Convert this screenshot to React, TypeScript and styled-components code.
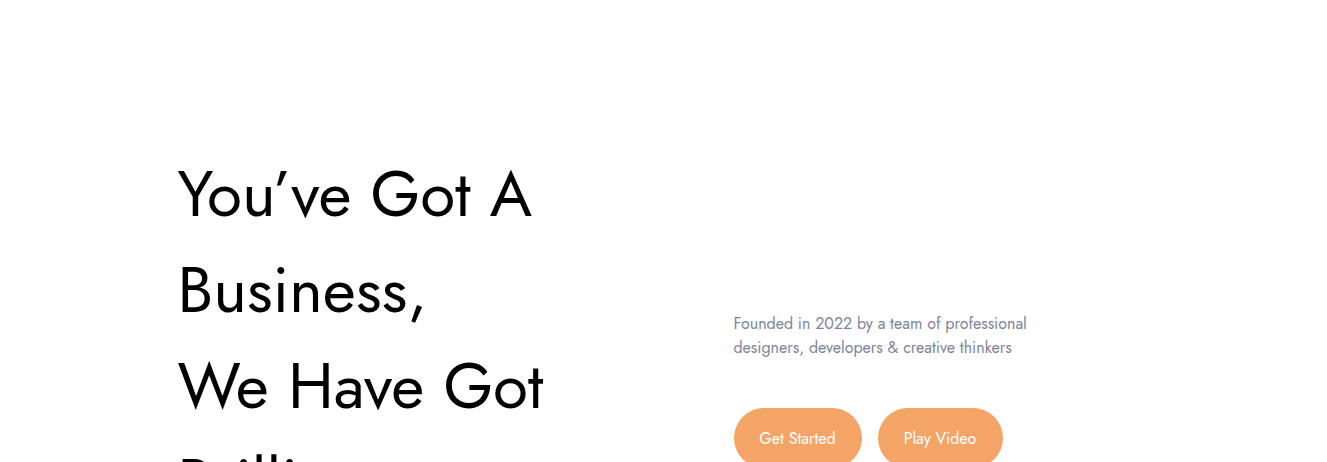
import styled, { createGlobalStyle } from "styled-components";

const GlobalStyle = createGlobalStyle`
  * {
    box-sizing: border-box;
  }
  body {
    margin: 0;
    background: #ffffff;
    font-family: Jost, Lato, "Open Sans", sans-serif;
  }
`;

const Hero = styled.section`
  width: 972px;
  margin: 0 auto;
  padding-top: 146px;
  display: grid;
  grid-template-columns: 556px 1fr;
`;

const Title = styled.h1`
  margin: 0;
  font-size: 64px;
  line-height: 96px;
  font-weight: 400;
  color: #000000;
  white-space: nowrap;
`;

const Side = styled.div`
  padding-top: 166px;
`;

const Lead = styled.p`
  margin: 0 0 48px;
  font-size: 16px;
  line-height: 24px;
  color: #7d859c;
  white-space: nowrap;
`;

const Actions = styled.div`
  display: flex;
  gap: 16px;
`;

const PillButton = styled.button<{ $width: number }>`
  width: ${(p) => p.$width}px;
  height: 60px;
  border: none;
  border-radius: 30px;
  background: #f3a466;
  color: #ffffff;
  font-family: inherit;
  font-size: 16px;
  cursor: pointer;
`;

export default function App() {
  return (
    <>
      <GlobalStyle />
      <Hero>
        <Title>
          You’ve Got A
          <br />
          Business,
          <br />
          We Have Got
          <br />
          Brilliant
          <br />
          Minds
        </Title>
        <Side>
          <Lead>
            Founded in 2022 by a team of professional
            <br />
            designers, developers &amp; creative thinkers
          </Lead>
          <Actions>
            <PillButton $width={128}>Get Started</PillButton>
            <PillButton $width={125}>Play Video</PillButton>
          </Actions>
        </Side>
      </Hero>
    </>
  );
}
